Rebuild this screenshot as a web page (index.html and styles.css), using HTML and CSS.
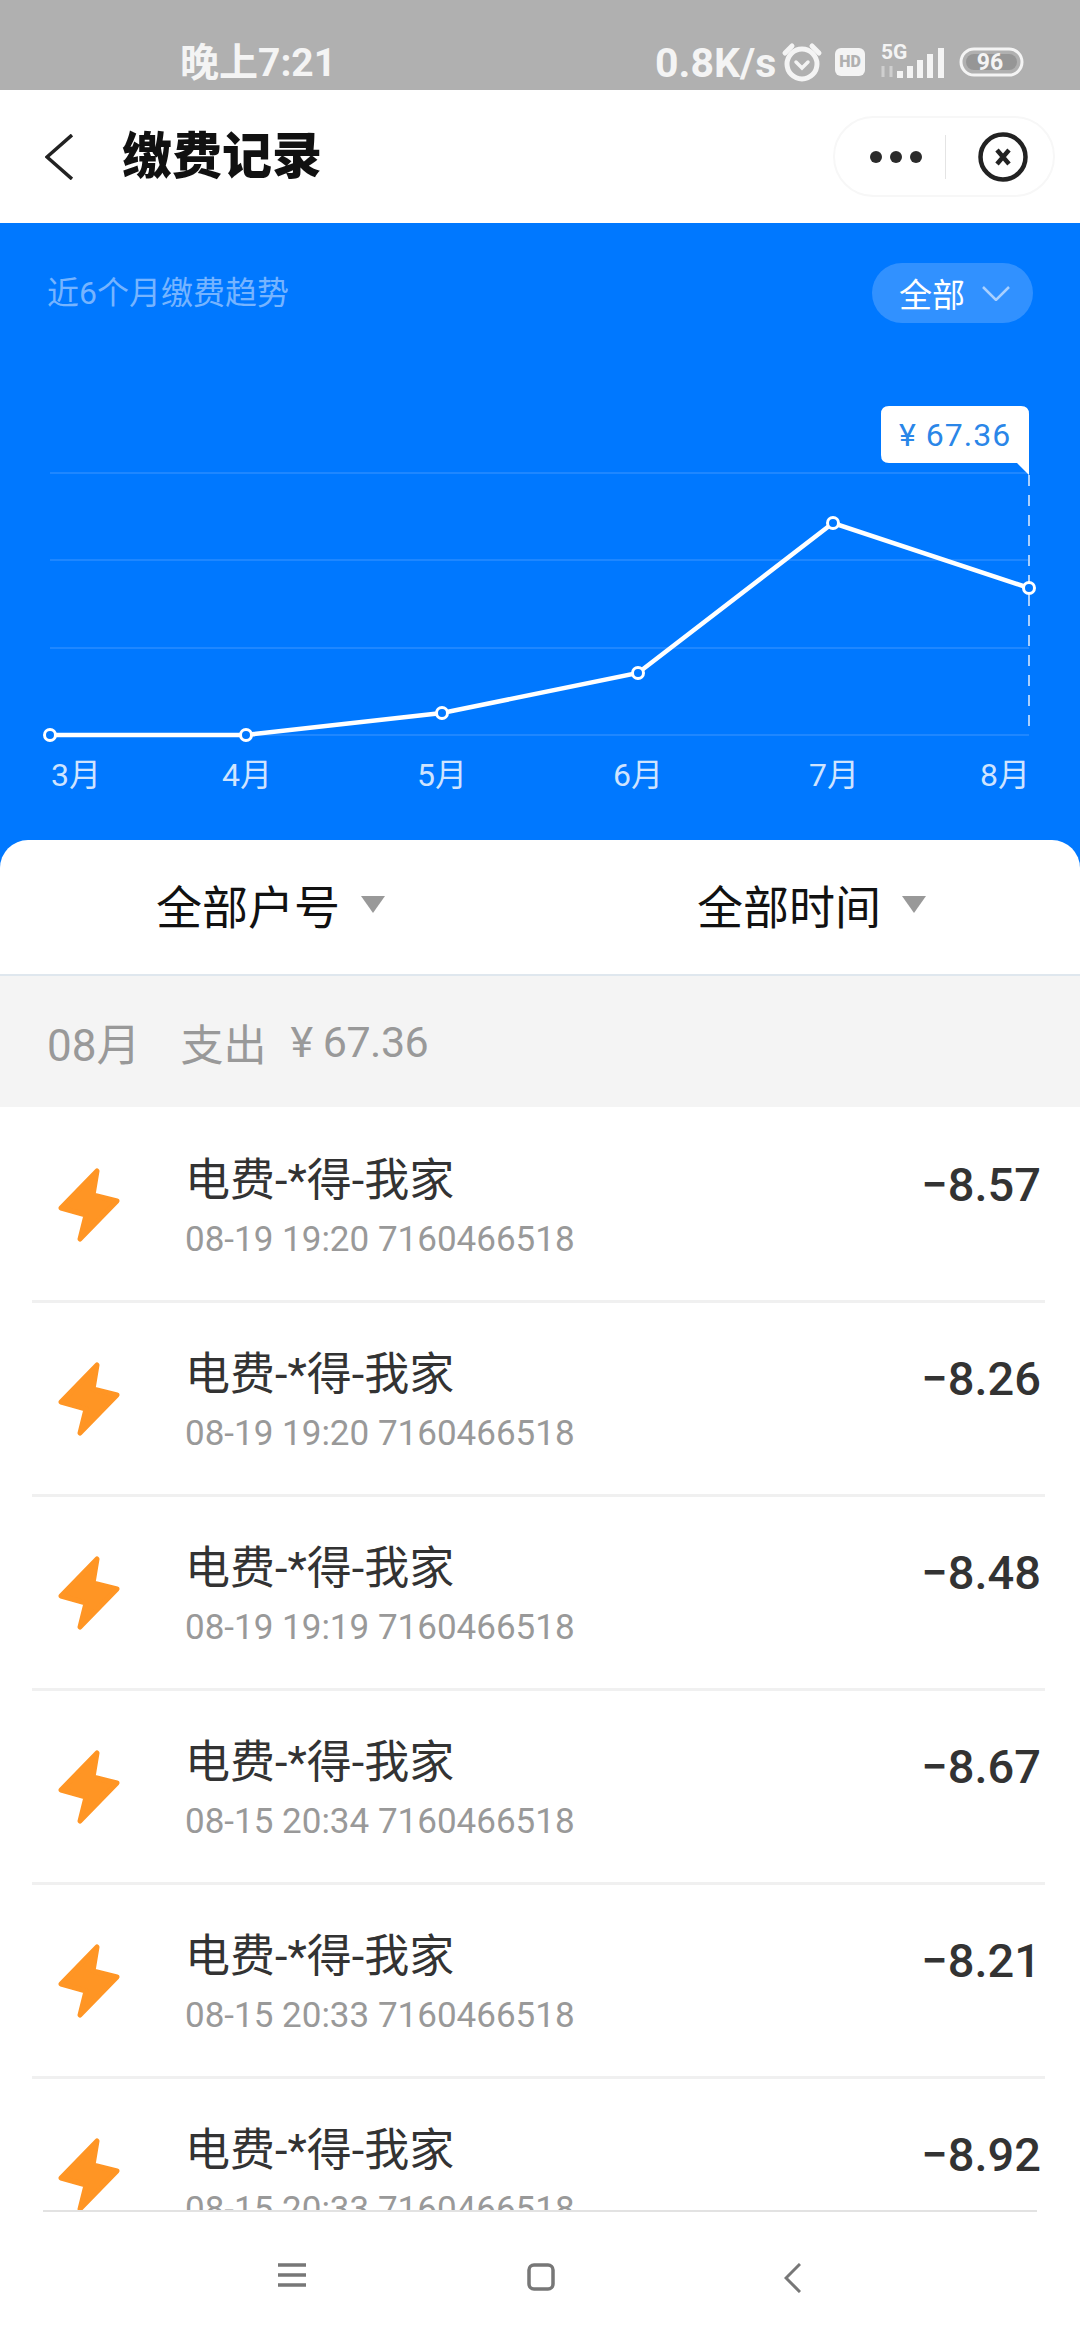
FILE: index.html
```html
<!DOCTYPE html>
<html lang="zh-CN">

<head>
    <meta charset="UTF-8">
    <title>缴费记录</title>
    <link rel="stylesheet" href="styles.css">
</head>

<body>
    <div class="status-bar">
        <span class="status-time">晚上7:21</span>
        <span class="status-speed">0.8K/s</span>
        <svg class="status-icons" viewBox="780 40 245 45" width="245" height="45">
            <!-- alarm -->
            <circle class="st-line" cx="802" cy="64" r="15"/>
            <path class="st-line" d="M785 53 L792 46 M819 53 L812 46"/>
            <path class="st-thin" d="M796 62 L802 68 L808 62"/>
            <!-- HD -->
            <rect class="st-fill" x="835" y="48" width="30" height="28" rx="6"/>
            <text class="st-hd" x="850" y="67">HD</text>
            <!-- signal -->
            <text class="st-5g" x="881" y="59">5G</text>
            <path class="st-dim" d="M883 66 V77 M891 66 V77"/>
            <rect class="st-fill" x="897" y="71" width="6" height="7"/>
            <rect class="st-fill" x="907" y="66" width="6" height="12"/>
            <rect class="st-fill" x="917" y="60" width="6" height="18"/>
            <rect class="st-fill" x="927" y="54" width="6" height="24"/>
            <rect class="st-fill" x="938" y="48" width="6" height="30"/>
            <!-- battery -->
            <rect class="st-batt" x="961" y="49" width="61" height="26" rx="13"/>
            <rect class="st-level" x="966" y="54" width="51" height="16" rx="8"/>
            <text class="st-96" x="990" y="70">96</text>
        </svg>
    </div>

    <header class="title-bar">
        <svg class="back-icon" viewBox="0 0 28 46" width="28" height="46">
            <path d="M27 1 L2 23 L27 45"/>
        </svg>
        <h1 class="page-title">缴费记录</h1>
        <div class="capsule">
            <div class="capsule-dots"><i></i><i></i><i></i></div>
            <div class="capsule-line"></div>
            <svg class="capsule-close" viewBox="0 0 50 50" width="50" height="50">
                <circle cx="25" cy="25" r="22.5"/>
                <path d="M19 18 L31 32 M31 18 L19 32"/>
            </svg>
        </div>
    </header>

    <div class="main">
        <section class="hero">
            <div class="hero-head">
                <span class="hero-title">近6个月缴费趋势</span>
                <div class="range-pill">
                    <span>全部</span>
                    <svg viewBox="0 0 28 15" width="28" height="15"><path d="M1 1 L14 14 L27 1"/></svg>
                </div>
            </div>
            <svg class="chart" viewBox="0 323 1080 517" width="1080" height="517">
                <path class="grid" d="M50 473 H1029 M50 560 H1029 M50 648 H1029 M50 735 H1029"/>
                <path class="guide" d="M1029 475 V735"/>
                <path class="tip" d="M889 406 H1021 Q1029 406 1029 414 V475 L1017 463 H889 Q881 463 881 455 V414 Q881 406 889 406 Z"/>
                <text class="tip-text" x="899" y="446">¥ 67.36</text>
                <polyline class="trend" points="50,735 246,735 442,713 638,673 833,523 1029,588"/>
                <circle class="dot" cx="50" cy="735" r="5.5"/>
                <circle class="dot" cx="246" cy="735" r="5.5"/>
                <circle class="dot" cx="442" cy="713" r="5.5"/>
                <circle class="dot" cx="638" cy="673" r="5.5"/>
                <circle class="dot" cx="833" cy="523" r="5.5"/>
                <circle class="dot" cx="1029" cy="588" r="5.5"/>
                <text class="axis" x="51" y="786">3月</text>
                <text class="axis mid" x="247" y="786">4月</text>
                <text class="axis mid" x="442" y="786">5月</text>
                <text class="axis mid" x="638" y="786">6月</text>
                <text class="axis mid" x="834" y="786">7月</text>
                <text class="axis end" x="1030" y="786">8月</text>
            </svg>
        </section>

        <section class="sheet">
            <div class="filters">
                <div class="filter filter-a">全部户号<i class="caret"></i></div>
                <div class="filter filter-b">全部时间<i class="caret"></i></div>
            </div>
            <div class="month-bar">
                <span>08月</span>
                <span>支出</span>
                <span>¥ 67.36</span>
            </div>
            <div class="list">
                <div class="row">
                    <svg class="bolt" viewBox="0 0 62 74" width="62" height="74"><path d="M39 3 L35 27 L59 33 L22 71 L28 47 L3 40 Z"/></svg>
                    <div class="row-text">
                        <div class="row-title">电费-*得-我家</div>
                        <div class="row-sub">08-19 19:20 7160466518</div>
                    </div>
                    <div class="row-amount">−8.57</div>
                </div>
                <div class="row">
                    <svg class="bolt" viewBox="0 0 62 74" width="62" height="74"><path d="M39 3 L35 27 L59 33 L22 71 L28 47 L3 40 Z"/></svg>
                    <div class="row-text">
                        <div class="row-title">电费-*得-我家</div>
                        <div class="row-sub">08-19 19:20 7160466518</div>
                    </div>
                    <div class="row-amount">−8.26</div>
                </div>
                <div class="row">
                    <svg class="bolt" viewBox="0 0 62 74" width="62" height="74"><path d="M39 3 L35 27 L59 33 L22 71 L28 47 L3 40 Z"/></svg>
                    <div class="row-text">
                        <div class="row-title">电费-*得-我家</div>
                        <div class="row-sub">08-19 19:19 7160466518</div>
                    </div>
                    <div class="row-amount">−8.48</div>
                </div>
                <div class="row">
                    <svg class="bolt" viewBox="0 0 62 74" width="62" height="74"><path d="M39 3 L35 27 L59 33 L22 71 L28 47 L3 40 Z"/></svg>
                    <div class="row-text">
                        <div class="row-title">电费-*得-我家</div>
                        <div class="row-sub">08-15 20:34 7160466518</div>
                    </div>
                    <div class="row-amount">−8.67</div>
                </div>
                <div class="row">
                    <svg class="bolt" viewBox="0 0 62 74" width="62" height="74"><path d="M39 3 L35 27 L59 33 L22 71 L28 47 L3 40 Z"/></svg>
                    <div class="row-text">
                        <div class="row-title">电费-*得-我家</div>
                        <div class="row-sub">08-15 20:33 7160466518</div>
                    </div>
                    <div class="row-amount">−8.21</div>
                </div>
                <div class="row">
                    <svg class="bolt" viewBox="0 0 62 74" width="62" height="74"><path d="M39 3 L35 27 L59 33 L22 71 L28 47 L3 40 Z"/></svg>
                    <div class="row-text">
                        <div class="row-title">电费-*得-我家</div>
                        <div class="row-sub">08-15 20:33 7160466518</div>
                    </div>
                    <div class="row-amount">−8.92</div>
                </div>
            </div>
        </section>
    </div>

    <nav class="nav-bar">
        <svg class="nav-menu" viewBox="0 0 28 24" width="28" height="24"><path d="M0 2 H28 M0 12 H28 M0 22 H28"/></svg>
        <svg class="nav-home" viewBox="0 0 28 28" width="28" height="28"><rect x="2" y="2" width="24" height="24" rx="5"/></svg>
        <svg class="nav-back" viewBox="0 0 17 30" width="17" height="30"><path d="M16 1 L2 15 L16 29"/></svg>
    </nav>
</body>

</html>
```

FILE: styles.css
```css
* {
    box-sizing: border-box;
}

body {
    margin: 0;
    width: 1080px;
    height: 2340px;
    overflow: hidden;
    display: flex;
    flex-direction: column;
    background-color: #fff;
    font-family: Roboto, "Noto Sans CJK SC", sans-serif;
}

/* status bar */
.status-bar {
    height: 90px;
    flex: none;
    position: relative;
    display: flex;
    align-items: flex-end;
    padding-left: 180px;
    background-color: #b0b0b0;
    color: #f4f4f4;
    font-weight: 700;
}

.status-time {
    font-size: 39px;
    line-height: 46px;
    margin-bottom: 4px;
    width: 475px;
}

.status-speed {
    font-size: 41px;
    line-height: 46px;
    margin-bottom: 4px;
    width: 125px;
}

.status-icons {
    margin-bottom: 5px;
}

.st-line {
    fill: none;
    stroke: #f4f4f4;
    stroke-width: 5;
    stroke-linecap: round;
}

.st-thin {
    fill: none;
    stroke: #f4f4f4;
    stroke-width: 3.5;
    stroke-linecap: round;
}

.st-fill {
    fill: #f4f4f4;
}

.st-hd {
    fill: #b0b0b0;
    font-size: 16px;
    font-weight: 900;
    text-anchor: middle;
}

.st-5g {
    fill: #f4f4f4;
    font-size: 21px;
    font-weight: 700;
}

.st-dim {
    fill: none;
    stroke: #cfcfcf;
    stroke-width: 3;
}

.st-batt {
    fill: none;
    stroke: #f4f4f4;
    stroke-width: 3;
}

.st-level {
    fill: #969696;
}

.st-96 {
    fill: #f4f4f4;
    font-size: 23px;
    font-weight: 700;
    text-anchor: middle;
}

/* title bar */
.title-bar {
    height: 133px;
    flex: none;
    display: flex;
    align-items: center;
    padding-left: 45px;
    background-color: #fff;
}

.back-icon path {
    fill: none;
    stroke: #222;
    stroke-width: 3.5;
}

.page-title {
    margin: 0 0 0 49px;
    font-size: 50px;
    font-weight: 900;
    color: #111;
    line-height: 60px;
}

.capsule {
    margin-left: auto;
    margin-right: 25px;
    width: 222px;
    height: 81px;
    display: flex;
    align-items: center;
    border: 2px solid #f7f7f7;
    border-radius: 41px;
    padding-left: 35px;
}

.capsule-dots {
    display: flex;
    gap: 8px;
    width: 52px;
}

.capsule-dots i {
    width: 12px;
    height: 12px;
    border-radius: 50%;
    background-color: #2b2b2b;
}

.capsule-line {
    width: 1px;
    height: 44px;
    margin-left: 23px;
    background-color: #e4e4e4;
}

.capsule-close {
    margin-left: 32px;
}

.capsule-close circle,
.capsule-close path {
    fill: none;
    stroke: #222;
    stroke-width: 4.5;
}

/* blue chart area */
.main {
    flex: 1;
    min-height: 0;
    display: flex;
    flex-direction: column;
    background-color: #0078ff;
}

.hero {
    height: 617px;
    flex: none;
    padding-top: 40px;
}

.hero-head {
    height: 60px;
    display: flex;
    align-items: center;
    justify-content: space-between;
    padding: 0 47px;
}

.hero-title {
    font-size: 32px;
    line-height: 56px;
    color: #76b4ff;
}

.range-pill {
    width: 161px;
    height: 60px;
    display: flex;
    align-items: center;
    gap: 17px;
    padding-left: 27px;
    border-radius: 30px;
    background-color: #3191ff;
    color: #fff;
    font-size: 33px;
}

.range-pill svg path {
    fill: none;
    stroke: #a9d0ff;
    stroke-width: 2.5;
}

.chart {
    display: block;
}

.grid {
    fill: none;
    stroke: #1f87ff;
    stroke-width: 2;
}

.guide {
    fill: none;
    stroke: #a8d0ff;
    stroke-width: 2;
    stroke-dasharray: 11 9;
}

.tip {
    fill: #fff;
}

.tip-text {
    fill: #2a86e8;
    font-size: 32px;
    letter-spacing: 1px;
}

.trend {
    fill: none;
    stroke: #fff;
    stroke-width: 4.5;
}

.dot {
    fill: #0078ff;
    stroke: #fff;
    stroke-width: 3;
}

.axis {
    fill: #cfe4ff;
    font-size: 32px;
}

.axis.mid {
    text-anchor: middle;
}

.axis.end {
    text-anchor: end;
}

/* white sheet */
.sheet {
    flex: 1;
    min-height: 0;
    display: flex;
    flex-direction: column;
    border-radius: 28px 28px 0 0;
    background-color: #fff;
    overflow: hidden;
}

.filters {
    height: 136px;
    flex: none;
    display: flex;
    padding-bottom: 6px;
    border-bottom: 2px solid #dfe7ee;
    font-size: 46px;
    color: #111;
}

.filter {
    display: flex;
    align-items: center;
}

.filter-a {
    padding-left: 156px;
    width: 697px;
}

.caret {
    margin-left: 21px;
    border-left: 12px solid transparent;
    border-right: 12px solid transparent;
    border-top: 17px solid #999;
}

.month-bar {
    height: 131px;
    flex: none;
    display: flex;
    align-items: center;
    gap: 40px;
    padding-left: 47px;
    background-color: #f4f4f4;
    color: #999;
    font-size: 43px;
}

.month-bar span:first-child {
    font-size: 44px;
}

.month-bar span:last-child {
    margin-left: -16px;
    letter-spacing: -0.5px;
}

.list {
    flex: 1;
    min-height: 0;
    overflow: hidden;
    padding-top: 2px;
}

.row {
    height: 194px;
    margin: 0 35px 0 32px;
    padding: 0 4px 0 26px;
    display: flex;
    align-items: flex-start;
    border-bottom: 3px solid #f0f0f0;
}

.row:last-child {
    border-bottom: 0;
}

.bolt {
    flex: none;
    margin-top: 59px;
}

.bolt path {
    fill: #ff9524;
    stroke: #ff9524;
    stroke-width: 5;
    stroke-linejoin: round;
}

.row-text {
    flex: 1;
    margin-left: 65px;
    padding-top: 44px;
}

.row-title {
    font-size: 45px;
    line-height: 56px;
    color: #333;
}

.row-sub {
    margin-top: 6px;
    font-size: 35px;
    line-height: 50px;
    color: #999;
}

.row-amount {
    margin-top: 48px;
    font-size: 47px;
    line-height: 56px;
    font-weight: 500;
    color: #333;
}

/* bottom nav */
.nav-bar {
    height: 130px;
    flex: none;
    position: relative;
    display: flex;
    align-items: flex-start;
    margin: 0 43px;
    padding: 51px 0 0 235px;
    border-top: 2px solid #e2e2e2;
    background-color: #fff;
}

.nav-menu path {
    fill: none;
    stroke: #777;
    stroke-width: 3.5;
}

.nav-home {
    margin-left: 221px;
}

.nav-home rect {
    fill: none;
    stroke: #777;
    stroke-width: 3.5;
}

.nav-back {
    margin-left: 229px;
}

.nav-back path {
    fill: none;
    stroke: #777;
    stroke-width: 3;
}
```
